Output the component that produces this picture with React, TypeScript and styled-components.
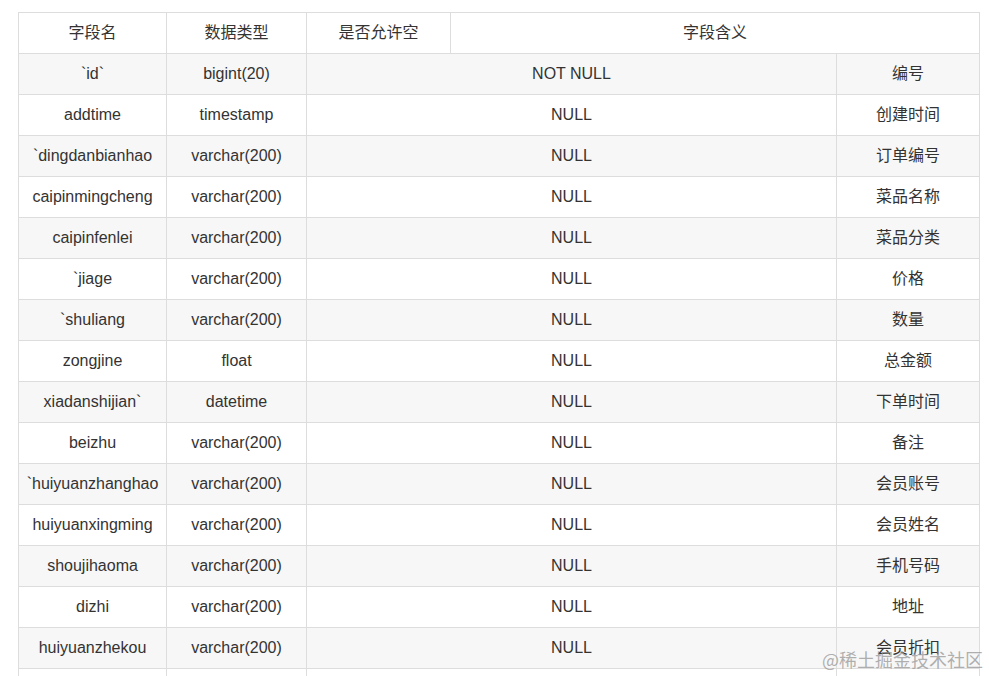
import React from "react";
import styled, { createGlobalStyle } from "styled-components";

const GlobalStyle = createGlobalStyle`
  html, body {
    margin: 0;
    padding: 0;
    background: #ffffff;
    overflow: hidden;
  }
  body {
    font-family: "Liberation Sans", Arial, "Noto Sans CJK SC", sans-serif;
    color: #333333;
  }
`;

const Page = styled.div`
  position: relative;
  width: 989px;
  height: 676px;
  padding: 12px 0 0 18px;
  box-sizing: border-box;
  overflow: hidden;
`;

const Table = styled.div`
  width: 962px;
  border-top: 1px solid #dddddd;
  border-left: 1px solid #dddddd;
  box-sizing: border-box;
`;

const HeadRow = styled.div`
  display: grid;
  grid-template-columns: 148px 140px 144px 529px;
  background: #ffffff;
`;

const BodyRow = styled.div<{ $shaded: boolean }>`
  display: grid;
  grid-template-columns: 148px 140px 530px 143px;
  background: ${(p) => (p.$shaded ? "#f7f7f7" : "#ffffff")};
`;

const Cell = styled.div`
  height: 41px;
  box-sizing: border-box;
  border-right: 1px solid #dddddd;
  border-bottom: 1px solid #dddddd;
  display: flex;
  align-items: center;
  justify-content: center;
  font-size: 16px;
  line-height: 20px;
  white-space: nowrap;
  overflow: hidden;
  color: #333333;
`;

const Watermark = styled.div`
  position: absolute;
  right: 6px;
  bottom: 7px;
  font-size: 18px;
  line-height: 20px;
  color: rgba(150, 150, 150, 0.75);
  font-family: "Noto Sans CJK SC", "Liberation Sans", sans-serif;
  letter-spacing: 0px;
  pointer-events: none;
`;

const rows: [string, string, string, string][] = [
  ["`id`", "bigint(20)", "NOT NULL", "编号"],
  ["addtime", "timestamp", "NULL", "创建时间"],
  ["`dingdanbianhao", "varchar(200)", "NULL", "订单编号"],
  ["caipinmingcheng", "varchar(200)", "NULL", "菜品名称"],
  ["caipinfenlei", "varchar(200)", "NULL", "菜品分类"],
  ["`jiage", "varchar(200)", "NULL", "价格"],
  ["`shuliang", "varchar(200)", "NULL", "数量"],
  ["zongjine", "float", "NULL", "总金额"],
  ["xiadanshijian`", "datetime", "NULL", "下单时间"],
  ["beizhu", "varchar(200)", "NULL", "备注"],
  ["`huiyuanzhanghao", "varchar(200)", "NULL", "会员账号"],
  ["huiyuanxingming", "varchar(200)", "NULL", "会员姓名"],
  ["shoujihaoma", "varchar(200)", "NULL", "手机号码"],
  ["dizhi", "varchar(200)", "NULL", "地址"],
  ["huiyuanzhekou", "varchar(200)", "NULL", "会员折扣"],
  ["huiyuanzhekoujia", "varchar(200)", "NULL", "会员折扣价"],
];

export default function App() {
  return (
    <>
      <GlobalStyle />
      <Page>
        <Table>
          <HeadRow>
            <Cell>字段名</Cell>
            <Cell>数据类型</Cell>
            <Cell>是否允许空</Cell>
            <Cell>字段含义</Cell>
          </HeadRow>
          {rows.map((r, i) => (
            <BodyRow key={i} $shaded={i % 2 === 0}>
              <Cell>{r[0]}</Cell>
              <Cell>{r[1]}</Cell>
              <Cell>{r[2]}</Cell>
              <Cell>{r[3]}</Cell>
            </BodyRow>
          ))}
        </Table>
        <Watermark>@稀土掘金技术社区</Watermark>
      </Page>
    </>
  );
}
